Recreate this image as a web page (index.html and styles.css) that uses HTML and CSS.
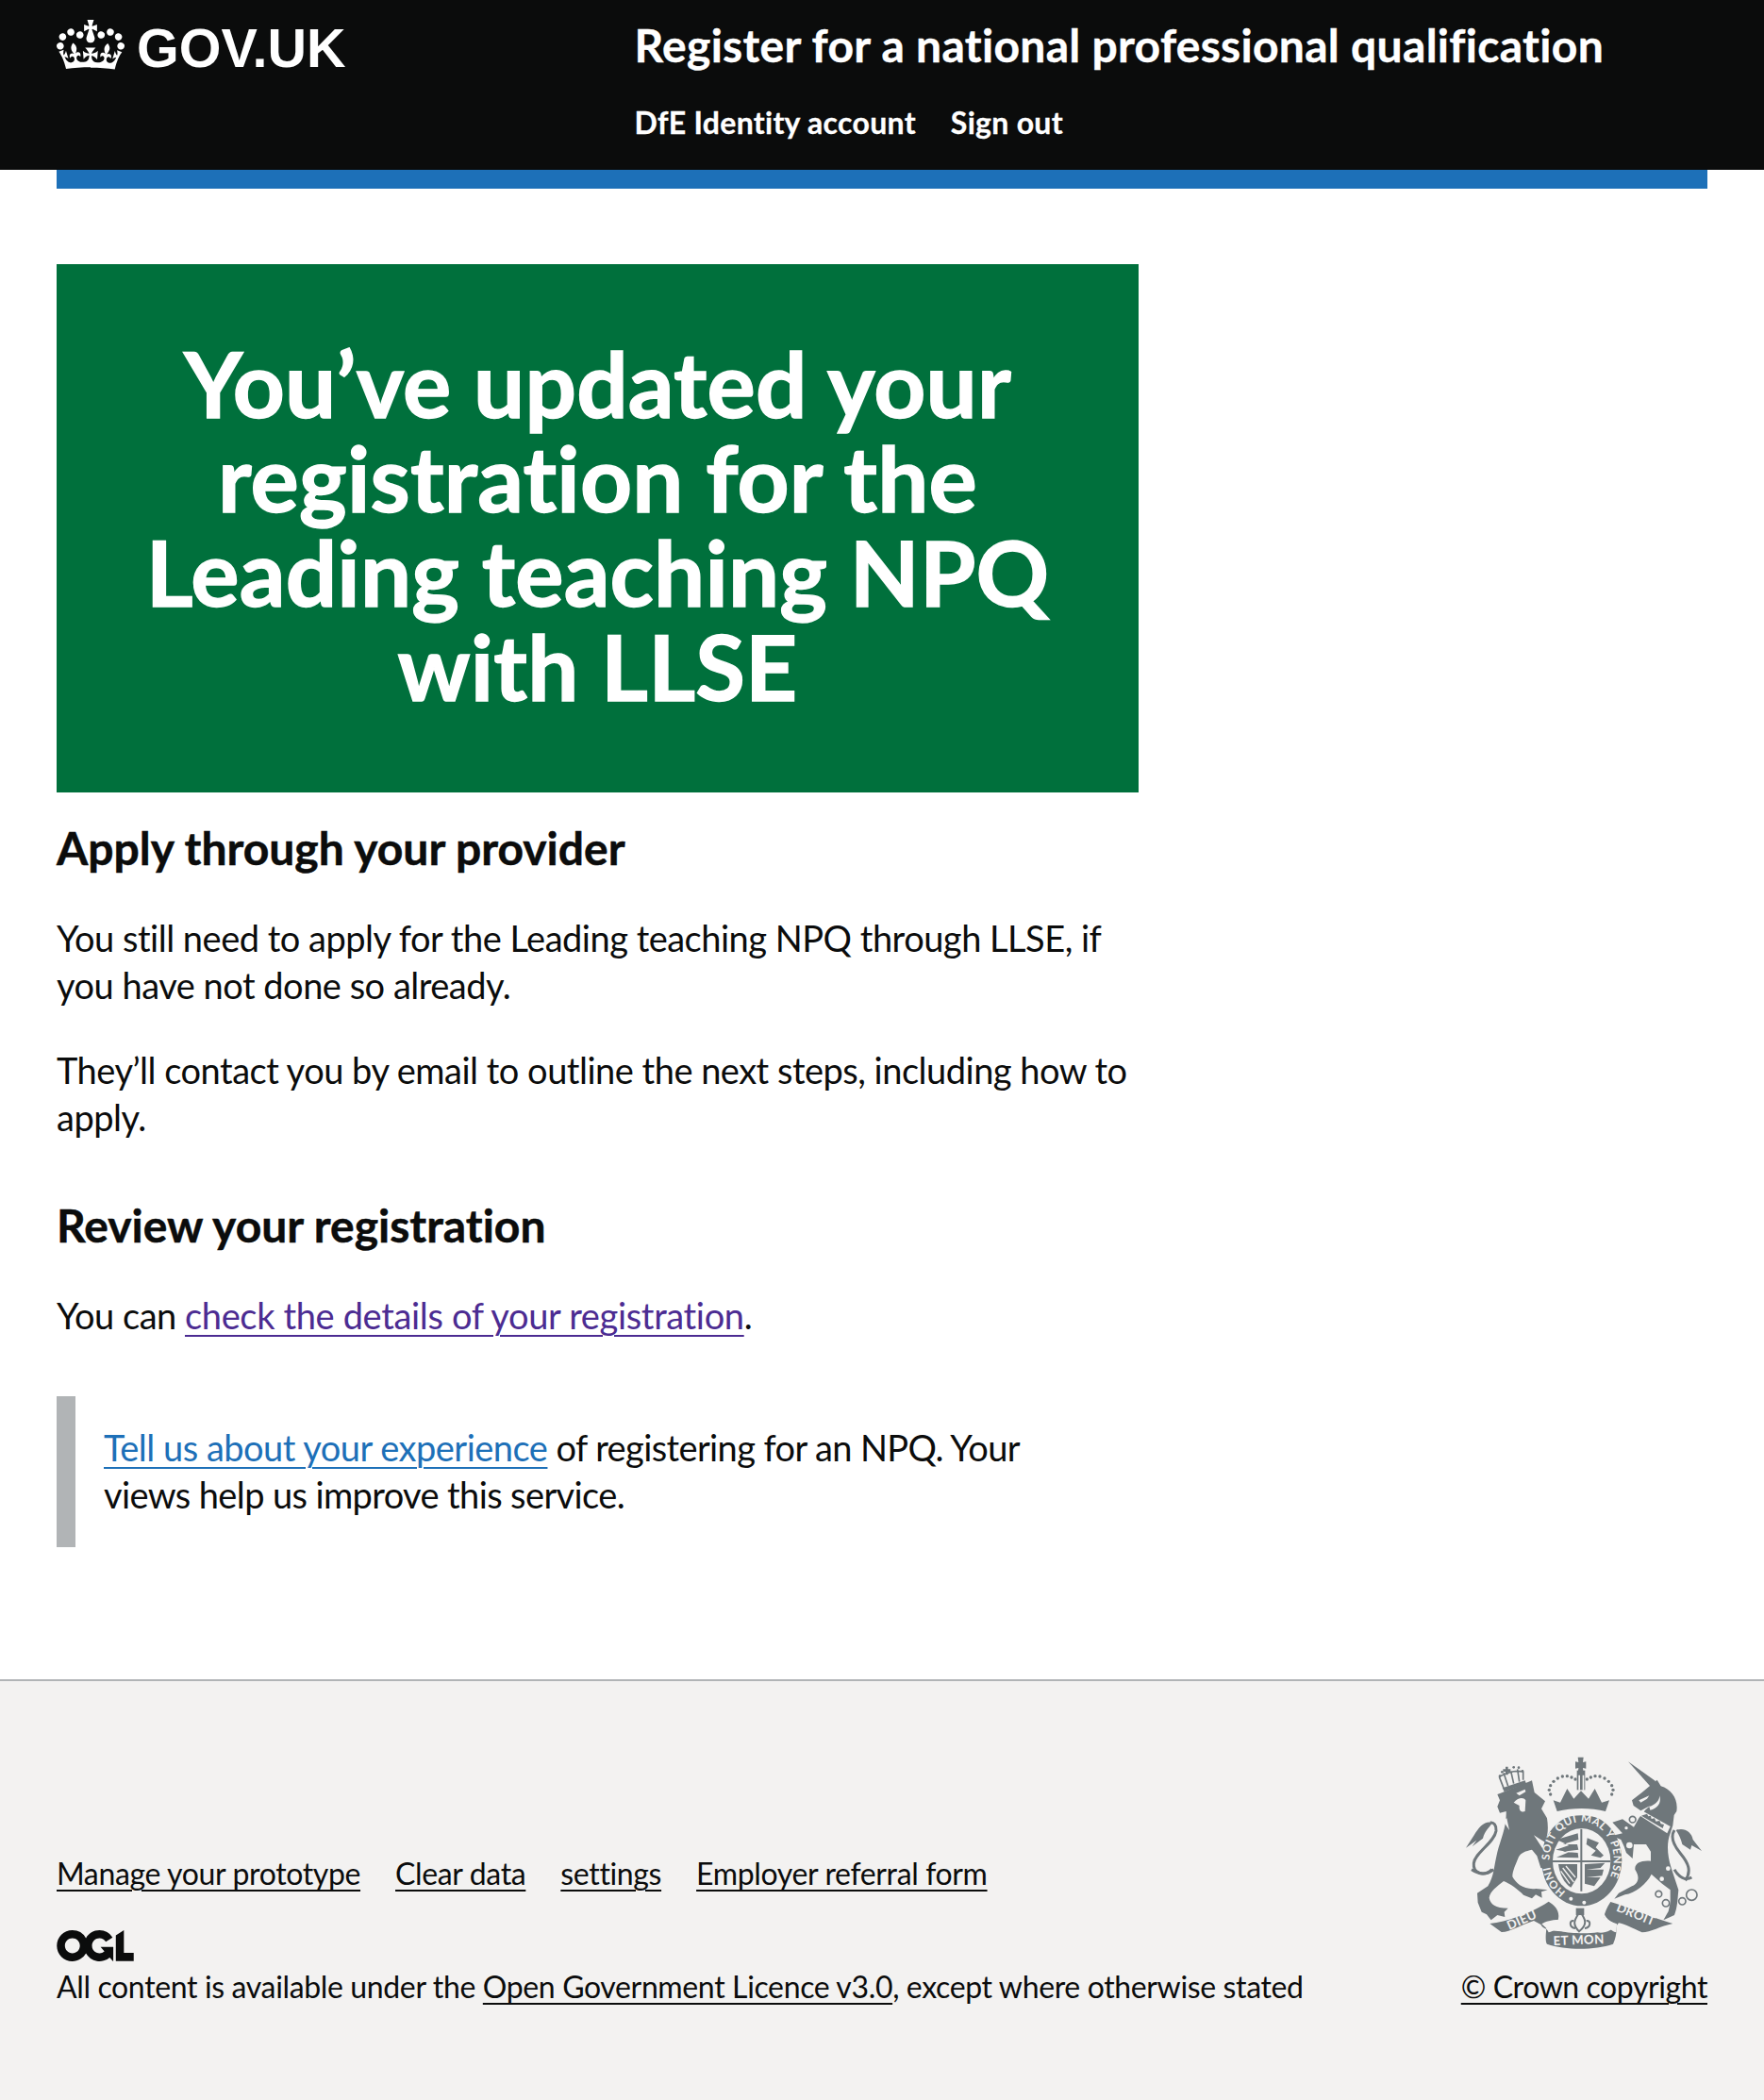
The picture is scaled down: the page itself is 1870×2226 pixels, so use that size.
FILE: index.html
```html
<!DOCTYPE html>
<html lang="en">
<head>
<meta charset="utf-8">
<title>Register for a national professional qualification</title>
<link rel="stylesheet" href="styles.css">
</head>
<body>
<header class="header">
  <div class="header-inner">
    <a class="logo" href="#">
      <svg class="crown" viewBox="0 0 132 97" aria-hidden="true"><path fill="currentColor" fill-rule="evenodd" d="M25 30.2c3.5 1.5 7.7-.2 9.1-3.7 1.5-3.6-.2-7.8-3.9-9.2-3.6-1.4-7.6.3-9.1 3.9-1.4 3.5.3 7.5 3.9 9zM9 39.5c3.6 1.5 7.8-.2 9.2-3.7 1.5-3.6-.2-7.8-3.9-9.1-3.6-1.5-7.6.2-9.1 3.8-1.4 3.5.3 7.5 3.8 9zM4.4 57.2c3.5 1.5 7.7-.2 9.1-3.8 1.5-3.6-.2-7.7-3.9-9.1-3.5-1.5-7.6.3-9.1 3.8-1.4 3.5.3 7.6 3.9 9.1zm38.3-21.4c3.5 1.5 7.7-.2 9.1-3.8 1.5-3.6-.2-7.7-3.9-9.1-3.6-1.5-7.6.3-9.1 3.8-1.3 3.6.4 7.7 3.9 9.1zm64.4-5.6c-3.6 1.5-7.8-.2-9.1-3.7-1.5-3.6.2-7.8 3.8-9.2 3.6-1.4 7.7.3 9.2 3.9 1.3 3.5-.4 7.5-3.9 9zm15.9 9.3c-3.6 1.5-7.7-.2-9.1-3.7-1.5-3.6.2-7.8 3.7-9.1 3.6-1.5 7.7.2 9.2 3.8 1.5 3.5-.3 7.5-3.8 9zm4.7 17.7c-3.6 1.5-7.8-.2-9.2-3.8-1.5-3.6.2-7.7 3.9-9.1 3.6-1.5 7.7.3 9.2 3.8 1.3 3.5-.4 7.6-3.9 9.1zM89.3 35.8c-3.6 1.5-7.8-.2-9.2-3.8-1.4-3.6.2-7.7 3.9-9.1 3.6-1.5 7.7.3 9.2 3.8 1.4 3.6-.3 7.7-3.9 9.1zM69.7 17.7l8.9 4.7V9.3l-8.9 2.8c-.2-.3-.5-.6-.9-.9L72.4 0H59.6l3.5 11.2c-.3.3-.6.5-.9.9l-8.8-2.8v13.1l8.8-4.7c.3.3.6.7.9.9l-5 15.4v.1c-.2.8-.4 1.6-.4 2.4 0 4.1 3.1 7.5 7 8.1h.2c.3 0 .7.1 1 .1.4 0 .7 0 1-.1h.2c4-.6 7.1-4.1 7.1-8.1 0-.8-.1-1.7-.4-2.4V34l-5.1-15.4c.4-.2.7-.6 1-.9zM66 92.8c16.9 0 32.8 1.1 47.1 3.2 4-16.9 8.9-26.7 14-33.5l-9.6-3.4c1 4.9 1.1 7.2 0 10.2-1.5-1.4-3-4.3-4.2-8.7L108.6 76c2.8-2 5-3.2 7.5-3.3-4.4 9.4-10 11.9-13.6 11.2-4.3-.8-6.3-4.6-5.6-7.9 1-4.7 5.7-5.9 8-.5 4.3-8.7-3-11.4-7.6-8.8 7.1-7.2 7.9-13.5 2.1-21.1-8 6.1-8.1 12.3-4.5 20.8-4.7-5.4-12.1-2.5-9.5 6.2 3.4-5.2 7.9-2 7.2 3.1-.6 4.3-6.4 7.8-13.5 7.2-10.3-.9-10.9-8-11.2-13 2.5-.5 7.1 1.8 11 7.3L80.2 60c-4.1 4.4-8 5.3-12.3 5.4 1.4-4.4 8-11.6 8-11.6H55.5s6.4 7.2 7.9 11.6c-4.2-.1-8-1-12.3-5.4l1.4 16.4c3.9-5.5 8.5-7.7 10.9-7.3-.3 5-.7 12.1-11 13-7.2.6-12.9-2.9-13.5-7.2-.7-5 3.8-8.3 7.1-3.1 2.7-8.7-4.6-11.6-9.4-6.2 3.7-8.5 3.6-14.7-4.6-20.8-5.8 7.6-5 13.9 2.2 21.1-4.7-2.6-11.9.1-7.7 8.8 2.3-5.5 7.1-4.2 8.1.5.7 3.3-1.3 7.1-5.7 7.9-3.5.7-9-1.8-13.5-11.2 2.5.1 4.7 1.3 7.5 3.3l-4.7-15.4c-1.2 4.4-2.7 7.2-4.3 8.7-1.1-3-.9-5.3 0-10.2l-9.5 3.4c5 6.9 9.9 16.7 14 33.5 14.8-2.1 30.8-3.2 47.7-3.2z"/></svg>
      <span class="logotype">GOV.UK</span>
    </a>
    <div class="header-content">
      <a class="service-name" href="#">Register for a national professional qualification</a>
      <nav class="nav">
        <a class="nav-link" href="#">DfE Identity account</a>
        <a class="nav-link" href="#">Sign out</a>
      </nav>
    </div>
  </div>
</header>

<main class="main">
  <div class="column">
    <div class="panel">
      <h1 class="panel-title">You’ve updated your registration for the Leading teaching NPQ with LLSE</h1>
    </div>
    <h2 class="heading">Apply through your provider</h2>
    <p class="body">You still need to apply for the Leading teaching NPQ through LLSE, if you have not done so already.</p>
    <p class="body">They’ll contact you by email to outline the next steps, including how to apply.</p>
    <h2 class="heading heading-gap">Review your registration</h2>
    <p class="body">You can <a class="link-visited" href="#">check the details of your registration</a>.</p>
    <div class="inset">
      <a class="link" href="#">Tell us about your experience</a> of registering for an NPQ. Your views help us improve this service.
    </div>
  </div>
</main>

<footer class="footer">
  <div class="footer-inner">
    <div class="footer-meta">
      <ul class="footer-links">
        <li><a class="footer-link" href="#">Manage your prototype</a></li>
        <li><a class="footer-link" href="#">Clear data</a></li>
        <li><a class="footer-link" href="#">settings</a></li>
        <li><a class="footer-link" href="#">Employer referral form</a></li>
      </ul>
      <svg class="ogl" viewBox="0 0 483.2 195.7" aria-hidden="true"><path fill="currentColor" d="M421.5 142.8V.1l-50.7 32.3v161.1h112.4v-50.7zm-122.3-9.6A47.12 47.12 0 0 1 221 97.8c0-26 21.1-47.1 47.1-47.1 16.7 0 31.4 8.7 39.7 21.8l42.7-27.2A97.63 97.63 0 0 0 268.1 0c-36.5 0-68.3 20.1-85.1 49.7A98 98 0 0 0 97.8 0C43.9 0 0 43.9 0 97.8s43.9 97.8 97.8 97.8c36.5 0 68.3-20.1 85.1-49.7a97.76 97.76 0 0 0 149.6 25.4l19.4 22.2h3v-87.8h-80l24.3 27.5zM97.8 145c-26 0-47.1-21.1-47.1-47.1s21.1-47.1 47.1-47.1 47.2 21 47.2 47S123.8 145 97.8 145"/></svg>
      <span class="licence">All content is available under the <a class="footer-link" href="#">Open Government Licence v3.0</a>, except where otherwise stated</span>
    </div>
    <div class="copyright">
      <svg class="crest" viewBox="162 66 750 612" aria-hidden="true">
        <defs>
          <path id="garter-top" d="M428 395 A102 120 0 1 1 604 476"/>
          <path id="garter-left" d="M480 496 A102 120 0 0 1 428 400"/>
        </defs>
        <g class="c-fill">
          <!-- lion -->
          <path d="M262 186 C300 172 340 155 372 142 L380 180 L414 208 L402 232 L420 262 C424 290 424 312 414 338 L400 330 L378 316 L428 392 L420 420 L400 420 L388 382 L372 362 C352 366 336 372 330 385 C320 410 310 430 310 448 C322 470 345 490 385 486 L422 490 L402 496 L404 515 L384 505 L372 517 L345 506 C330 490 300 468 282 462 C262 478 238 495 236 515 C240 535 255 548 296 548 L284 560 L286 576 L262 570 L242 586 L228 568 L212 560 L200 530 L198 500 L232 478 C252 445 250 420 262 370 C272 330 292 290 290 240 L270 245 L262 225 L270 205 Z"/>
          <!-- lion crown band -->
          <path d="M278 166 L350 142 L354 152 L284 178 Z"/>
          <!-- lion tail tuft -->
          <path d="M246 276 C222 270 205 288 188 316 L162 356 L196 332 L182 352 L216 326 C222 302 238 290 246 276 Z"/>
          <!-- unicorn horn -->
          <path d="M678 82 L762 142 L776 160 L755 168 Z"/>
          <!-- unicorn -->
          <path d="M690 205 L722 180 L748 158 L770 140 L782 160 C815 170 838 200 832 240 L824 252 L820 285 L812 310 C800 340 802 380 815 420 L838 490 C835 520 835 545 825 570 L790 586 L806 558 L812 530 L812 490 L786 470 L752 440 C738 470 700 500 668 505 L634 518 L648 500 L690 478 C708 470 718 452 700 425 C698 404 720 395 750 398 L750 368 L735 345 L696 345 L692 390 L672 372 L665 352 L655 330 L626 318 L660 310 L628 275 L660 265 L696 290 L712 262 L732 236 L748 222 L718 238 L695 222 Z"/>
          <!-- unicorn tail tuft -->
          <path d="M830 300 C855 290 880 305 884 330 L912 366 L880 348 L876 362 L850 345 C845 325 838 312 830 300 Z"/>
          <!-- garter -->
          <ellipse cx="530" cy="395" rx="128" ry="146"/>
          <!-- crown base -->
          <path d="M452 240 L440 205 L462 212 L484 168 L505 200 L528 175 L552 200 L572 168 L594 212 L618 205 L606 240 C560 228 500 228 452 240 Z"/>
          <path d="M515 110 h26 v62 h-26 Z"/>
          <!-- cross -->
          <path d="M518 68 h18 l-2 16 l10 -2 v22 l-10 -2 l2 18 h-18 l2 -18 l-10 2 v-22 l10 2 Z"/>
          <!-- crown dots -->
          <circle cx="431" cy="186" r="5"/><circle cx="427" cy="172" r="5"/><circle cx="431" cy="158" r="5"/><circle cx="441" cy="145" r="5"/><circle cx="454" cy="135" r="5"/><circle cx="469" cy="129" r="5"/><circle cx="484" cy="128" r="5"/><circle cx="498" cy="132" r="5"/><circle cx="510" cy="138" r="5"/>
          <circle cx="626" cy="186" r="5"/><circle cx="630" cy="172" r="5"/><circle cx="626" cy="158" r="5"/><circle cx="616" cy="145" r="5"/><circle cx="603" cy="135" r="5"/><circle cx="588" cy="129" r="5"/><circle cx="573" cy="128" r="5"/><circle cx="559" cy="132" r="5"/><circle cx="547" cy="138" r="5"/>
          <!-- lion crown dots and cross -->
          <circle cx="270" cy="128" r="4"/><circle cx="277" cy="115" r="4"/><circle cx="330" cy="101" r="4"/><circle cx="342" cy="112" r="4"/><circle cx="314" cy="100" r="4"/>
          <path d="M288 98 h8 v8 h8 v8 h-8 v10 h-8 v-10 h-8 v-8 h8 Z"/>
          <!-- ribbons -->
          <path d="M238 597 C300 590 375 560 425 527 C448 540 462 560 455 585 C435 585 415 590 403 598 L418 612 C415 640 415 655 420 662 C480 682 570 682 630 662 C640 640 642 620 640 600 L600 578 C605 560 610 545 622 528 C680 545 760 580 820 597 C780 605 750 625 722 625 C690 610 665 598 648 595 C630 620 600 630 580 625 C550 630 490 628 465 622 C440 620 410 620 400 600 L378 588 C340 600 300 625 275 624 Z"/>
        </g>
        <g class="c-crownline" fill="none">
          <path d="M268 130 L282 166 M282 118 L296 160 M305 112 L314 152 M326 106 L332 146 M344 114 L344 140 M268 130 C290 118 320 108 344 114"/>
        </g>
        <g class="c-bg">
          <ellipse cx="530" cy="398" rx="92" ry="104"/>
          <path d="M455 250 C500 232 560 232 604 250 C596 258 590 264 584 262 C550 250 505 250 476 262 C468 264 462 258 455 250 Z"/>
          <path d="M520 125 h5 v48 h-5 Z M533 125 h5 v48 h-5 Z"/>
          <!-- ribbon gaps -->
          <path d="M418 612 C450 605 460 590 462 570 C470 590 445 625 425 625 Z"/>
          <path d="M642 598 C620 592 606 580 600 560 C595 590 620 622 640 625 Z"/>
          <!-- head details -->
          <path d="M322 182 L350 170 L352 178 L332 190 Z"/>
          <path d="M314 212 C330 195 345 195 352 205 L350 240 C340 244 330 240 332 222 Z"/>
          <path d="M280 270 L292 262 L300 300 Z"/>
          <path d="M712 205 L745 190 L738 200 L718 212 Z"/>
          <path d="M745 225 C765 220 778 205 778 190 C785 215 770 232 748 236 Z"/>
          <!-- unicorn collar -->
          <path d="M716 254 L726 240 L812 288 L802 310 Z"/>
          <!-- leg gaps -->
          <circle cx="692" cy="266" r="8"/><circle cx="672" cy="293" r="5"/><circle cx="682" cy="348" r="10"/>
          <circle cx="816" cy="376" r="6"/><circle cx="805" cy="422" r="7"/><circle cx="785" cy="455" r="7"/>
        </g>
        <g class="c-fill">
          <path d="M726 252 l12 -4 l4 8 l8 -2 l2 10 l10 -2 l4 10 l12 -2 l4 10 l10 2 l-4 12 L720 254 Z"/>
        </g>
        <g class="c-line" fill="none">
          <path d="M250 425 C215 450 184 435 187 405 C190 372 252 340 258 302 C260 285 250 274 240 276"/>
          <path d="M180 425 C205 440 225 445 245 425"/>
          <path d="M825 300 C812 320 820 345 845 375 C870 405 880 430 860 460"/>
          <path d="M825 425 C840 450 860 462 880 450"/>
        </g>
        <g class="c-chain" fill="none">
          <circle cx="775" cy="503" r="10"/><circle cx="798" cy="532" r="11"/><circle cx="850" cy="526" r="11"/><circle cx="880" cy="506" r="17"/>
          <circle cx="692" cy="266" r="10"/>
        </g>
        <g class="c-fill">
          <!-- quarterings -->
          <path d="M526 296 h6 v198 h-6 Z M438 396 h184 v6 h-184 Z"/>
          <path d="M450 330 L518 310 L520 330 L470 345 L516 345 L520 362 L470 368 L518 372 L520 388 L450 386 L490 370 L448 362 L490 348 Z"/>
          <path d="M548 325 L585 340 L575 355 L600 380 L590 388 L560 380 L575 365 L545 345 Z"/>
          <path d="M456 408 L516 408 L516 450 L496 482 C475 470 460 440 456 408 Z"/>
          <path d="M540 408 L604 404 L590 420 L545 425 L600 425 L595 445 L545 450 L590 450 L570 478 L540 470 Z"/>
        </g>
        <g class="c-bg">
          <path d="M470 420 L505 465 M480 414 L510 450 M464 430 L492 470" class="c-bg-line" fill="none"/>
        </g>
        <!-- fleur -->
        <g class="c-fleur" fill="none">
          <path d="M525 560 C505 585 500 600 522 622 C548 600 545 585 525 560 Z"/>
          <path d="M505 588 C490 585 490 610 510 612 M545 588 C560 585 560 610 540 612"/>
        </g>
        <path class="c-fill" d="M512 548 h26 v22 h-26 Z"/>
        <g class="c-bg">
          <circle cx="496" cy="518" r="6"/><circle cx="538" cy="530" r="6"/>
        </g>
        <text class="c-text c-motto"><textPath href="#garter-top">SOIT QUI MAL Y PENSE</textPath></text>
        <text class="c-text c-motto"><textPath href="#garter-left">HONI</textPath></text>
        <text class="c-text c-scroll" transform="translate(300 618) rotate(-24)">DIEU</text>
        <text class="c-text c-scroll" transform="translate(440 666) rotate(-2)">ET MON</text>
        <text class="c-text c-scroll" transform="translate(638 556) rotate(22)">DROIT</text>
      </svg>
      <a class="footer-link copyright-link" href="#">© Crown copyright</a>
    </div>
  </div>
</footer>
</body>
</html>
```
FILE: styles.css
```css
* { box-sizing: border-box; }
html, body { margin: 0; padding: 0; }
body {
  font-family: "Lato", "Noto Sans", sans-serif;
  font-variant-ligatures: none;
  color: #0b0c0c;
  background: #fff;
  font-size: 38px;
  line-height: 50px;
  letter-spacing: -0.5px;
}
.header { background: #0b0c0c; color: #fff; height: 200px; position: relative; }
.header::after { content: ""; display: block; position: absolute; left: 0; right: 0; top: 180px; height: 20px; background: #fff; }
.header-inner {
  display: flex;
  width: 1750px;
  height: 200px;
  margin: 0 auto;
  border-bottom: 20px solid #1d70b8;
  position: relative;
  z-index: 1;
}
.logo {
  width: 612.5px;
  padding-top: 21px;
  display: flex;
  align-items: flex-start;
  color: #fff;
  text-decoration: none;
}
.crown { width: 72px; height: 53px; display: block; }
.logotype {
  font-family: "Liberation Sans", Arial, sans-serif;
  font-weight: 700;
  font-size: 57.5px;
  line-height: 60px;
  letter-spacing: 0;
  margin: 0 0 0 13px;
}
.header-content { padding-top: 18px; }
.service-name {
  display: block;
  color: #fff;
  text-decoration: none;
  font-weight: 700;
  font-size: 48px;
  line-height: 60px;
  letter-spacing: 0.3px;
  -webkit-text-stroke: 0.4px #fff;
}
.nav { display: flex; gap: 37px; margin-top: 27px; }
.nav-link {
  color: #fff;
  text-decoration: none;
  font-weight: 700;
  font-size: 32px;
  line-height: 50px;
  letter-spacing: 0.3px;
  -webkit-text-stroke: 0.3px #fff;
}
.main { width: 1750px; margin: 0 auto; padding: 80px 0 140px; }
.column { width: 1147px; }
.panel { background: #00703c; color: #fff; padding: 76px 60px 84px; text-align: center; margin-bottom: 29px; }
.panel-title {
  margin: 0;
  font-size: 96px;
  line-height: 100px;
  font-weight: 700;
  letter-spacing: 0.2px;
  -webkit-text-stroke: 1.4px #fff;
}
.heading {
  margin: 0 0 40px;
  font-size: 48px;
  line-height: 60px;
  font-weight: 700;
  letter-spacing: 0;
  -webkit-text-stroke: 0.5px #0b0c0c;
}
.heading-gap { margin-top: 60px; }
.body { margin: 0 0 40px; }
.link, .link-visited, .footer-link {
  text-decoration: underline;
  text-decoration-thickness: 2px;
}
.link, .link-visited { text-underline-offset: 6px; }
.link-visited { color: #4c2c92; letter-spacing: -0.35px; }
.link { color: #1d70b8; letter-spacing: -0.5px; }
.footer-link { text-underline-offset: 5px; color: #0b0c0c; }
.inset { margin-top: 61px; padding: 29px 30px 31px; border-left: 20px solid #b1b4b6; letter-spacing: -0.62px; }
.footer {
  background: #f3f2f1;
  border-top: 2px solid #b1b4b6;
  padding: 80px 0 100px;
  font-size: 32px;
  line-height: 40px;
  letter-spacing: -0.36px;
}
.footer-inner { width: 1750px; margin: 0 auto; display: flex; justify-content: space-between; align-items: flex-end; }
.footer-meta { display: flex; flex-direction: column; align-items: flex-start; }
.footer-links { display: flex; gap: 37px; list-style: none; margin: 0 0 40px; padding: 0; }
.ogl { width: 82px; height: 33px; display: block; margin-bottom: 7px; color: #0b0c0c; }
.copyright { display: flex; flex-direction: column; align-items: center; }
.copyright-link { letter-spacing: -0.42px; }
.crest { width: 250px; height: 204px; display: block; margin-bottom: 20px; }
.c-fill { fill: #6f777b; }
.c-bg { fill: #f3f2f1; }
.c-bg-line { stroke: #f3f2f1; stroke-width: 4; }
.c-line { stroke: #6f777b; stroke-width: 9; }
.c-chain { stroke: #6f777b; stroke-width: 5; }
.c-fleur { stroke: #6f777b; stroke-width: 6; }
.c-crownline { stroke: #6f777b; stroke-width: 5; }
.c-text { fill: #f3f2f1; font-family: "Lato", sans-serif; font-weight: 700; }
.c-motto { font-size: 34px; letter-spacing: 2px; }
.c-scroll { font-size: 40px; letter-spacing: 1px; }
```
